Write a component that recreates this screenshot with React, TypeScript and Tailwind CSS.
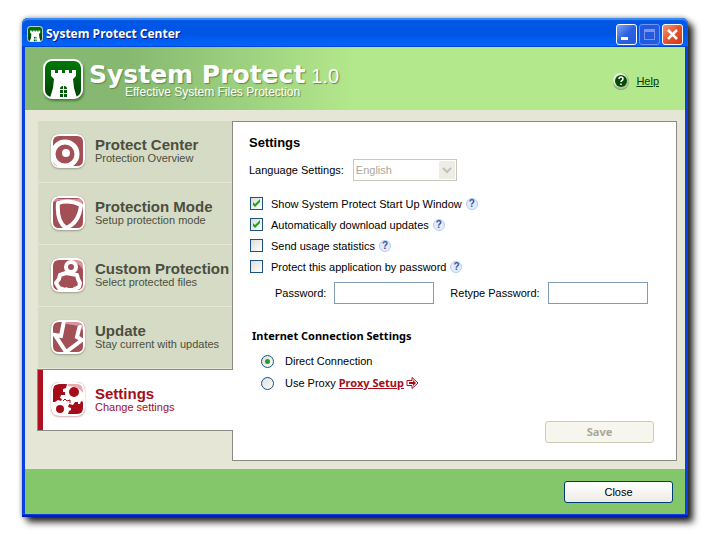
import { FC, ReactNode, useState } from 'react';
import clsx from 'clsx';

interface NavItem {
  id: string;
  title: string;
  hint: string;
  icon: ReactNode;
}

const TargetIcon = () => (
  <>
    <circle cx="14" cy="20" r="12" fill="none" stroke="#fff" strokeWidth="5" />
    <circle cx="15" cy="19" r="4" fill="#fff" />
  </>
);

const ShieldIcon = () => (
  <>
    <path d="M3 3h28v6L20 4 8 4 3 6z" fill="#d8949b" />
    <path
      d="M7 7C13 5 22 5 30 9C29 19 25 28 15 32C9 28 6 19 7 7z"
      fill="#a34f56"
      stroke="#fff"
      strokeWidth="4"
      strokeLinejoin="round"
    />
  </>
);

const PersonIcon = () => (
  <>
    <path d="M20 2h12v10c-2-4-5-7-12-8z" fill="#d8949b" />
    <path
      d="M15 15L9 17L8 21L5 25L8 30L14 32H22L28 29L29 25L27 21L26 17z"
      fill="#a34f56"
      stroke="#fff"
      strokeWidth="4"
      strokeLinejoin="round"
    />
    <path d="M12 33l3-4 7 3 1-4 2 5z" fill="#fff" />
    <circle cx="20" cy="9" r="5" fill="#a34f56" stroke="#fff" strokeWidth="4" />
  </>
);

const ArrowIcon = () => (
  <>
    <path d="M12 2h20v9L28 6z" fill="#d8949b" />
    <path
      d="M13 1L10 16L4 15L15 32L31 20L26 17L29 5"
      fill="#a34f56"
      stroke="#fff"
      strokeWidth="4"
    />
    <path d="M15 2h13v4L15 4z" fill="#d8949b" />
  </>
);

const GearsIcon = () => (
  <>
    <path d="M2 2h30v30H2z" fill="#fff" />
    <path
      d="M2 8Q2 2 8 2h8l-1 4 -3 1v3h2v3l-4 0 -1 3 2 1-1 2-3-1-3 2H2z M32 20v7q0 5-5 5H17l1-3 2-1v-2l-3-1 1-3 4 1 2-3h3v2h2l1-3z"
      fill="#a50d1a"
    />
    <circle cx="23" cy="10" r="5" fill="#a50d1a" />
    <circle cx="9" cy="27" r="4" fill="#a50d1a" />
    <path d="M17 2h11q4 1 4 9-3-6-15-7z" fill="#e9aab0" />
    <path d="M12 19l2-2 2 2 3-1v3" fill="none" stroke="#a50d1a" />
  </>
);

const navItems: NavItem[] = [
  { id: 'center', title: 'Protect Center', hint: 'Protection Overview', icon: <TargetIcon /> },
  { id: 'mode', title: 'Protection Mode', hint: 'Setup protection mode', icon: <ShieldIcon /> },
  { id: 'custom', title: 'Custom Protection', hint: 'Select protected files', icon: <PersonIcon /> },
  { id: 'update', title: 'Update', hint: 'Stay current with updates', icon: <ArrowIcon /> },
  { id: 'settings', title: 'Settings', hint: 'Change settings', icon: <GearsIcon /> },
];

const Tower: FC<{ className?: string }> = ({ className }) => (
  <svg viewBox="0 0 40 40" className={className} aria-hidden>
    <defs>
      <linearGradient id="tower" x1="0" y1="0" x2="0" y2="1">
        <stop offset="0" stopColor="#007a08" />
        <stop offset="1" stopColor="#003f05" />
      </linearGradient>
    </defs>
    <rect x="1" y="1" width="38" height="38" rx="8" fill="url(#tower)" stroke="#fff" strokeWidth="2" />
    <path
      d="M8 11h4v3h3v-3h4v3h3v-3h4v3h3v-3h4v6l-3 3 1 9 3 10H7l3-10 1-9-3-3z"
      fill="#fff"
    />
    <path
      d="M17 38v-3h3v3zM21 38v-3h3v3zM17 34v-3h3v3zM21 34v-3h3v3zM17 30q0-3 3-3v3zM24 30q0-3-3-3v3z"
      fill="#005a05"
    />
  </svg>
);

const HelpDot: FC<{ topic: string }> = ({ topic }) => (
  <button
    type="button"
    aria-label={`Help: ${topic}`}
    className="flex size-3 items-center justify-center rounded-full border border-[#b4cdf4] bg-[#e3edfc] text-[10px] leading-none font-bold text-[#34579b]"
  >
    ?
  </button>
);

const CheckRow: FC<{ label: string; defaultChecked?: boolean }> = ({
  label,
  defaultChecked,
}) => (
  <div className="flex h-[21px] items-center">
    <label className="flex items-center gap-2">
      <span className="grid size-[13px]">
        <input
          type="checkbox"
          defaultChecked={defaultChecked}
          className="peer col-start-1 row-start-1 size-[13px] appearance-none border border-[#1c5180] bg-linear-to-br from-[#dcdcd7] to-white"
        />
        <svg
          viewBox="0 0 13 13"
          className="pointer-events-none invisible col-start-1 row-start-1 size-[13px] peer-checked:visible"
          aria-hidden
        >
          <path d="M3 5v3l2 2 5-5V2L5 7z" fill="#21a121" />
        </svg>
      </span>
      {label}
    </label>
    <span className="ml-1">
      <HelpDot topic={label} />
    </span>
  </div>
);

const ProxyRadio: FC<{ id: string; defaultChecked?: boolean }> = ({ id, defaultChecked }) => (
  <span className="grid size-[13px] place-items-center">
    <input
      id={id}
      type="radio"
      name="connection"
      defaultChecked={defaultChecked}
      className="peer col-start-1 row-start-1 size-[13px] appearance-none rounded-full border border-[#1c5180] bg-linear-to-br from-[#dcdcd7] to-white"
    />
    <span className="pointer-events-none invisible col-start-1 row-start-1 size-[5px] rounded-full bg-[#21a121] peer-checked:visible" />
  </span>
);

const TitleBar = () => (
  <header className="flex h-[29px] items-center rounded-t-md bg-linear-to-b from-[#0058e6] from-0% via-[#0054e3] via-50% to-[#0066ff] px-[5px] pt-[3px] shadow-[inset_0_2px_1px_#3c8cf5,inset_0_-1px_0_#0046d5]">
    <Tower className="size-4" />
    <h1 className="ml-[3px] flex-1 font-['Open_Sans',sans-serif] text-[12px] font-bold text-white [text-shadow:1px_1px_0_#0a1883]">
      System Protect Center
    </h1>
    <div className="flex gap-[2px]">
      <button
        type="button"
        aria-label="Minimize"
        className="size-[21px] rounded-[3px] border border-white bg-linear-to-br from-[#7fa5f5] via-[#2a62e2] to-[#2458dc]"
      >
        <svg viewBox="0 0 19 19" aria-hidden>
          <path d="M4 12h7v3H4z" fill="#fff" />
        </svg>
      </button>
      <button
        type="button"
        aria-label="Maximize"
        disabled
        className="size-[21px] rounded-[3px] border border-[#7293ee] bg-[#2159e0]"
      >
        <svg viewBox="0 0 19 19" aria-hidden>
          <path d="M4 4h11v11H4zM5 7h9v7H5z" fill="#7c94e8" fillRule="evenodd" />
        </svg>
      </button>
      <button
        type="button"
        aria-label="Close window"
        className="size-[21px] rounded-[3px] border border-white bg-linear-to-br from-[#f0977f] via-[#e0512d] to-[#cf3c14]"
      >
        <svg viewBox="0 0 19 19" aria-hidden>
          <path d="M5 5l9 9M14 5l-9 9" stroke="#fff" strokeWidth="2.500" />
        </svg>
      </button>
    </div>
  </header>
);

const Banner = () => (
  <div className="flex h-[63px] items-center bg-linear-to-r from-[#86b871] from-15% to-[#b4e88c] to-50% pr-[26px] pl-[18px]">
    <Tower className="size-10 drop-shadow-[1px_2px_1px_#4c7a3c]" />
    <div className="ml-1.5 pt-2 text-white [text-shadow:1px_1px_1px_#5d8a4c]">
      <div className="flex items-baseline gap-1.5 leading-[18px]">
        <span className="font-['DejaVu_Sans',sans-serif] text-[25px] font-bold">
          System Protect
        </span>
        <span className="text-[20px]">1.0</span>
      </div>
      <div className="pl-9 text-[12px] leading-[14px]">Effective System Files Protection</div>
    </div>
    <a href="#help" className="ml-auto flex items-center gap-1.5 pt-1 text-[#003c00] underline">
      <svg viewBox="0 0 18 18" className="size-[18px]" aria-hidden>
        <circle cx="9" cy="10" r="8" fill="#7f9f6c" />
        <circle cx="9" cy="9" r="8" fill="#a9c795" />
        <circle cx="8" cy="8" r="7" fill="#e4f0da" />
        <circle cx="9" cy="9" r="6" fill="#064a08" />
        <path
          d="M7 7q0-2 2-2t2 2q0 1-1 1.500T9 10M9 11.500v1.500"
          fill="none"
          stroke="#fff"
          strokeWidth="1.500"
        />
      </svg>
      Help
    </a>
  </div>
);

const Sidebar: FC<{ active: string; onSelect: (id: string) => void }> = ({
  active,
  onSelect,
}) => (
  <nav className="w-[194px] shrink-0">
    {navItems.map(({ id, title, hint, icon }) => {
      const current = id === active;
      return (
        <button
          key={id}
          type="button"
          aria-current={current ? 'page' : undefined}
          onClick={() => onSelect(id)}
          className={clsx(
            'flex h-[62px] text-left',
            current
              ? 'relative z-10 -ml-px w-[196px] border-y border-l border-y-[#8b8b83] border-l-[#8b8b83] bg-white text-[#a50d1a]'
              : 'w-full border-b border-[#e6e6d6] bg-[#d6dbc5] pl-[13px] text-[#4b4f3f]'
          )}
        >
          {current && <span className="mr-2 h-full w-[5px] bg-[#a9121e]" />}
          <span className="flex h-full items-center pb-0.5">
            <svg
              viewBox="0 0 34 34"
              className={clsx(
                'size-[34px] shrink-0 overflow-hidden rounded-lg',
                current ? 'shadow-[0_1px_2px_#d8a9ad]' : 'shadow-[0_1px_2px_#9a9d8c]'
              )}
              aria-hidden
            >
              <rect width="34" height="34" fill="#a34f56" />
              {icon}
              <path
                d="M0 0h34v34H0zM8 2Q2 2 2 8v18q0 6 6 6h18q6 0 6-6V8q0-6-6-6z"
                fill="#fff"
                fillRule="evenodd"
              />
            </svg>
            <span className="ml-2.5 flex flex-col whitespace-nowrap">
              <span className="text-[15px] leading-[15px] font-bold">{title}</span>
              <span className="leading-[12px]">{hint}</span>
            </span>
          </span>
        </button>
      );
    })}
  </nav>
);

const SettingsPanel = () => (
  <form className="min-w-0 flex-1 border border-[#8b8b83] bg-white px-4 pt-3 pb-[17px]">
    <h2 className="text-[13px] leading-[18px] font-bold">Settings</h2>
    <div className="mt-[7px] flex items-center">
      <label htmlFor="language">Language Settings:</label>
      <div className="ml-[9px] grid w-[104px] items-center">
        <select
          id="language"
          disabled
          className="col-start-1 row-start-1 h-[22px] w-full appearance-none border border-[#c9c7ba] bg-white pl-0.5 text-[#aca899]"
        >
          <option>English</option>
        </select>
        <svg
          viewBox="0 0 16 18"
          className="pointer-events-none col-start-1 row-start-1 mr-0.5 h-[18px] w-4 justify-self-end"
          aria-hidden
        >
          <rect width="16" height="18" rx="1" fill="#eeede5" />
          <path d="M4 7l4 4 4-4" fill="none" stroke="#c3c1b3" strokeWidth="2" />
        </svg>
      </div>
    </div>

    <div className="mt-3 pl-px">
      <CheckRow label="Show System Protect Start Up Window" defaultChecked />
      <CheckRow label="Automatically download updates" defaultChecked />
      <CheckRow label="Send usage statistics" />
      <CheckRow label="Protect this application by password" />
    </div>

    <div className="mt-[5px] flex items-center pl-[26px]">
      <label htmlFor="password">Password:</label>
      <input
        id="password"
        type="password"
        className="ml-2 h-[22px] w-[100px] border border-[#7f9db9] px-1"
      />
      <label htmlFor="retype" className="ml-4">
        Retype Password:
      </label>
      <input
        id="retype"
        type="password"
        className="ml-2 h-[22px] w-[100px] border border-[#7f9db9] px-1"
      />
    </div>

    <h3 className="mt-6 pl-[3px] font-['Noto_Sans',sans-serif] text-[11px] leading-[16px] font-bold">
      Internet Connection Settings
    </h3>
    <div className="mt-1.5 flex h-[22px] items-center gap-[11px] pl-3">
      <ProxyRadio id="direct" defaultChecked />
      <label htmlFor="direct">Direct Connection</label>
    </div>
    <div className="flex h-[22px] items-center pl-3">
      <ProxyRadio id="proxy" />
      <label htmlFor="proxy" className="ml-[11px]">
        Use Proxy
      </label>
      <a
        href="#proxy-setup"
        className="ml-[3px] flex items-center gap-0.5 font-['Noto_Sans',sans-serif] font-bold text-[#a50d1a]"
      >
        <span className="underline">Proxy Setup</span>
        <svg viewBox="0 0 13 12" className="h-3 w-[13px]" aria-hidden>
          <path d="M1 3.500h5v-3L12 6l-6 5.500v-3H1z" fill="none" stroke="#a50d1a" />
          <path d="M3 5h4V3l3 3-3 3V7H3z" fill="#a50d1a" />
        </svg>
      </a>
    </div>

    <div className="mt-[27px] flex justify-end pr-1.5">
      <button
        type="submit"
        disabled
        className="h-[22px] w-[109px] rounded-[3px] border border-[#cfcbbb] bg-[#f6f5ee] font-['Noto_Sans',sans-serif] font-bold text-[#aca899]"
      >
        Save
      </button>
    </div>
  </form>
);

export default function App() {
  const [active, setActive] = useState('settings');

  return (
    <div className="min-h-screen bg-white pt-[18px] pr-[21px] pb-[27px] pl-[22px] font-['Liberation_Sans',Arial,sans-serif] text-[11px] leading-[14px] text-black">
      <div className="rounded-t-md bg-[#0a3fe0] shadow-[5px_5px_7px_#000000dd,0_0_5px_#00000066]">
        <TitleBar />
        <div className="mx-[3px] border-b border-[#0a3fe0]">
          <Banner />
          <main className="flex bg-[#e6e6d6] pt-[11px] pr-2 pb-2 pl-[13px]">
            <Sidebar active={active} onSelect={setActive} />
            <SettingsPanel />
          </main>
          <footer className="flex h-[45px] items-center justify-end bg-[#84c76b] pr-3">
            <button
              type="button"
              className="h-[22px] w-[109px] rounded-[3px] border border-[#003c74] bg-linear-to-b from-white to-[#ecebe6]"
            >
              Close
            </button>
          </footer>
        </div>
        <div className="h-[2px] bg-[#0019b0]" />
      </div>
    </div>
  );
}
